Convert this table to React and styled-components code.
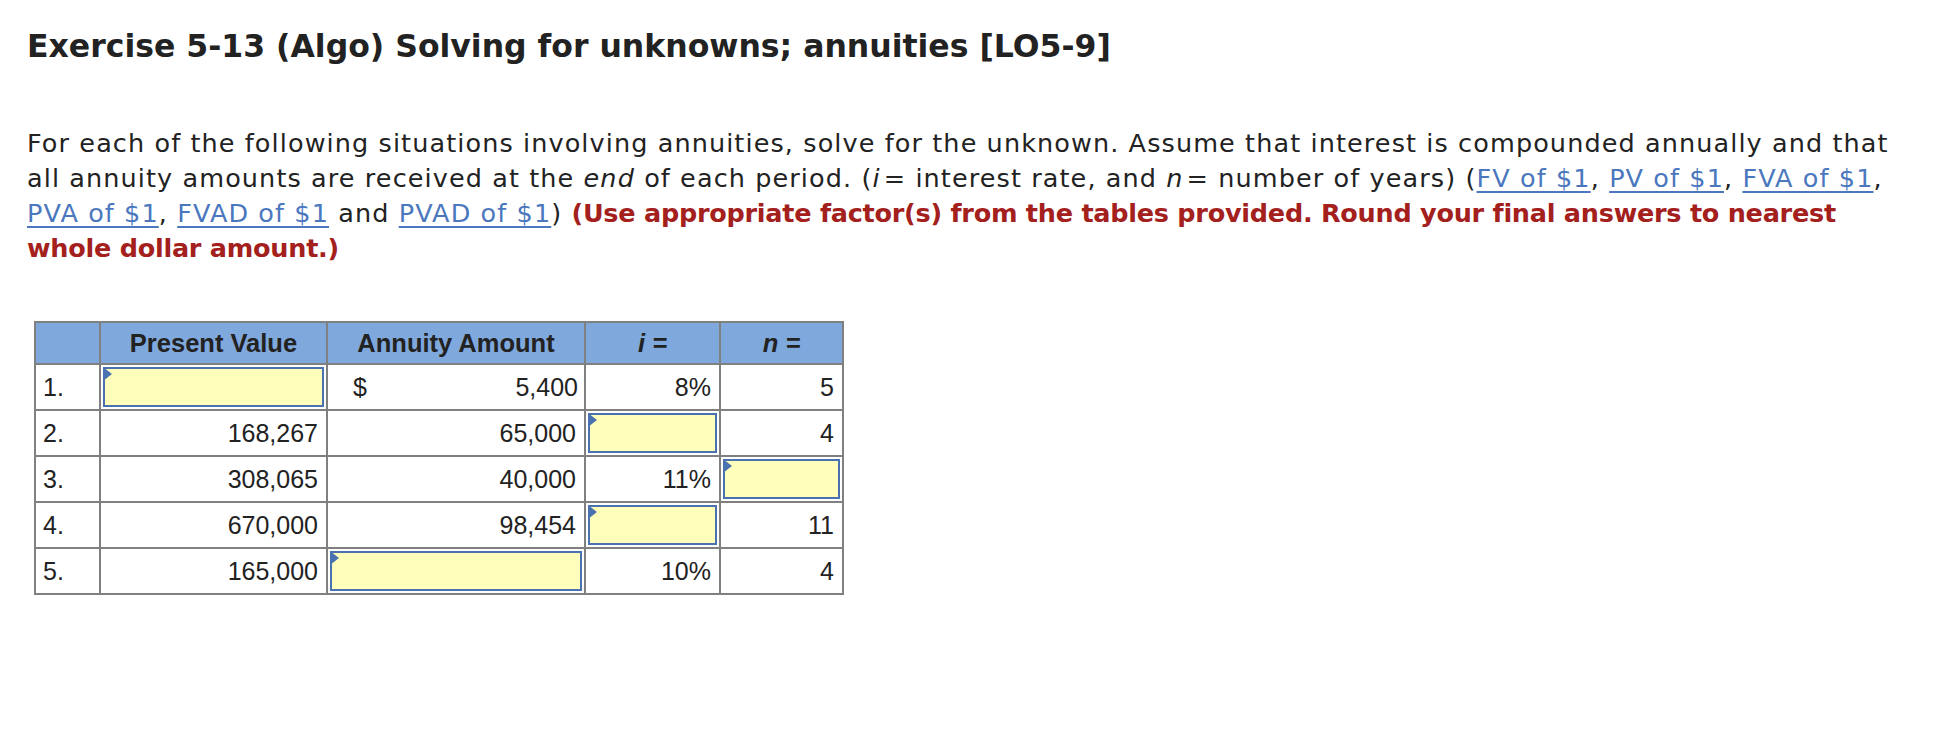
import styled, { createGlobalStyle } from "styled-components";

const Global = createGlobalStyle`
  html, body { margin: 0; padding: 0; background: #fff; }
  body { font-family: "DejaVu Sans", "Liberation Sans", sans-serif; color: #222; }
`;

const Page = styled.div`
  padding: 24px 0 40px 27px;
`;

const Title = styled.h1`
  font-size: 31.5px;
  font-weight: 700;
  line-height: 44px;
  margin: 0 0 58px;
  color: #222;
`;

const Intro = styled.p`
  font-size: 25.5px;
  letter-spacing: 1.1px;
  line-height: 35px;
  white-space: nowrap;
  margin: 0 0 55px;
  color: #222;
`;

const Var = styled.em`
  font-style: italic;
  margin-right: ${(p) => (p.$tight ? "3px" : "0")};
`;

const Ref = styled.a`
  color: #4a77bd;
  text-decoration: underline;
  text-decoration-thickness: 2px;
  text-underline-offset: 4px;
`;

const Note = styled.strong`
  color: #a3201d;
  font-weight: 700;
  letter-spacing: -0.25px;
`;

const Table = styled.table`
  margin-left: 7px;
  border-collapse: collapse;
  font-family: "Liberation Sans", Arial, sans-serif;
  font-size: 25px;
  color: #222;
  td, th { border: 2px solid #808080; padding: 0; }
  tbody tr { height: 46px; }
`;

const Head = styled.th`
  background: #7fa8dd;
  height: 40px;
  width: ${(p) => p.$w}px;
  font-size: 25.5px;
  font-weight: 700;
  text-align: center;
  font-style: ${(p) => (p.$italic ? "italic" : "normal")};
`;

const Cell = styled.td`
  text-align: ${(p) => (p.$left ? "left" : "right")};
  padding: ${(p) => (p.$left ? "0 0 0 7px" : "0 8px 0 0")} !important;
`;

const MoneyCell = styled.td`
  padding: 0 6px 0 25px !important;
`;

const Money = styled.div`
  display: flex;
  justify-content: space-between;
`;

const InputCell = styled.td`
  padding: 2px !important;
`;

const Entry = styled.div`
  position: relative;
  height: 40px;
  box-sizing: border-box;
  background: #ffffbb;
  border: 2px solid #4a72b0;
  &::before {
    content: "";
    position: absolute;
    left: -2px;
    top: -2px;
    border-top: 7px solid transparent;
    border-bottom: 7px solid transparent;
    border-left: 9px solid #4a72b0;
  }
`;

const rows = [
  { n: "1.", pv: null, amt: "5,400", money: true, i: "8%", yrs: "5" },
  { n: "2.", pv: "168,267", amt: "65,000", i: null, yrs: "4" },
  { n: "3.", pv: "308,065", amt: "40,000", i: "11%", yrs: null },
  { n: "4.", pv: "670,000", amt: "98,454", i: null, yrs: "11" },
  { n: "5.", pv: "165,000", amt: null, i: "10%", yrs: "4" },
];

function Value({ v }) {
  if (v == null)
    return (
      <InputCell>
        <Entry />
      </InputCell>
    );
  return <Cell>{v}</Cell>;
}

export default function App() {
  return (
    <Page>
      <Global />
      <Title>Exercise 5-13 (Algo) Solving for unknowns; annuities [LO5-9]</Title>
      <Intro>
        For each of the following situations involving annuities, solve for the unknown. Assume that
        interest is compounded annually and that
        <br />
        all annuity amounts are received at the <Var>end</Var> of each period. (<Var $tight>i</Var>= interest
        rate, and <Var $tight>n</Var>= number of years) (<Ref href="#">FV of $1</Ref>,{" "}
        <Ref href="#">PV of $1</Ref>, <Ref href="#">FVA of $1</Ref>,
        <br />
        <Ref href="#">PVA of $1</Ref>, <Ref href="#">FVAD of $1</Ref> and <Ref href="#">PVAD of $1</Ref>){" "}
        <Note>
          (Use appropriate factor(s) from the tables provided. Round your final answers to nearest
          <br />
          whole dollar amount.)
        </Note>
      </Intro>

      <Table>
        <thead>
          <tr>
            <Head $w={63} />
            <Head $w={225}>Present Value</Head>
            <Head $w={256}>Annuity Amount</Head>
            <Head $w={133} $italic>i =</Head>
            <Head $w={121} $italic>n =</Head>
          </tr>
        </thead>
        <tbody>
          {rows.map((r) => (
            <tr key={r.n}>
              <Cell $left>{r.n}</Cell>
              <Value v={r.pv} />
              {r.money ? (
                <MoneyCell>
                  <Money>
                    <span>$</span>
                    <span>{r.amt}</span>
                  </Money>
                </MoneyCell>
              ) : (
                <Value v={r.amt} />
              )}
              <Value v={r.i} />
              <Value v={r.yrs} />
            </tr>
          ))}
        </tbody>
      </Table>
    </Page>
  );
}
